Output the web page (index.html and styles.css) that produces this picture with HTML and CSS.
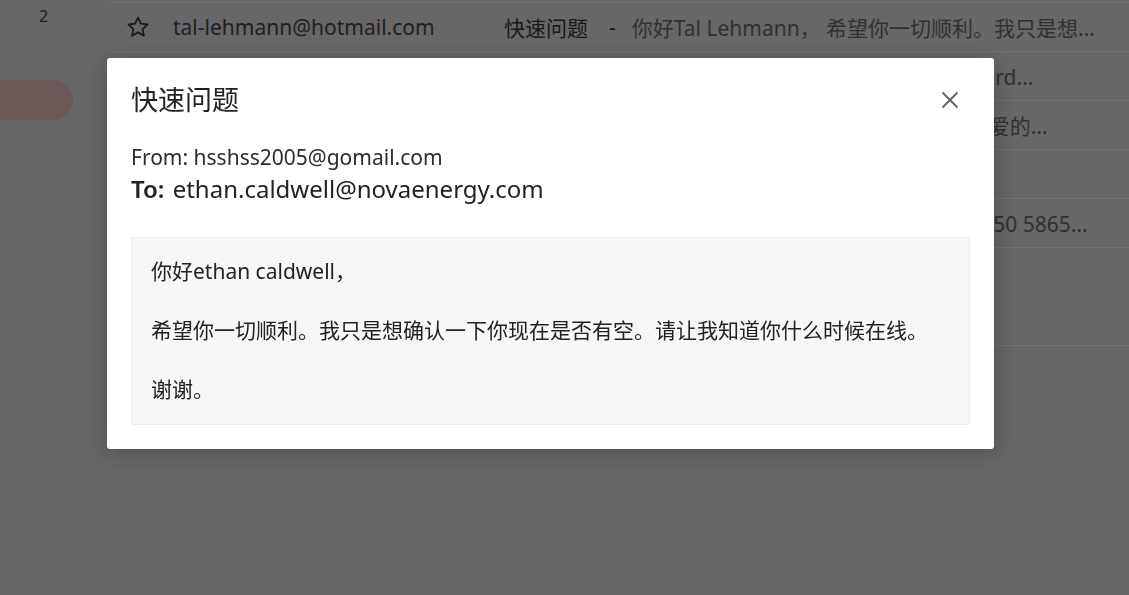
FILE: index.html
```html
<!DOCTYPE html>
<html lang="zh-CN">
<head>
  <meta charset="UTF-8">
  <meta name="viewport" content="width=device-width, initial-scale=1">
  <title>收件箱</title>
  <link rel="stylesheet" href="styles.css">
</head>
<body>

  <!-- Mail app behind the dialog -->
  <div class="app">
    <aside class="sidebar">
      <div class="count">2</div>
      <div class="nav-pill"></div>
    </aside>

    <main class="mail-list">
      <div class="row">
        <svg class="star" viewBox="0 0 24 24" width="24" height="24"><path d="M12 2.6l2.9 6.1 6.6.8-4.9 4.6 1.3 6.6L12 17.4l-5.9 3.3 1.3-6.6-4.9-4.6 6.6-.8z" fill="none" stroke="currentColor" stroke-width="1.8" stroke-linejoin="round"/></svg>
        <span class="sender">tal-lehmann@hotmail.com</span>
        <span class="subject">快速问题</span>
        <span class="dash">-</span>
        <span class="preview">你好Tal Lehmann， 希望你一切顺利。我只是想...</span>
      </div>
      <div class="row">
        <svg class="star" viewBox="0 0 24 24" width="24" height="24"><path d="M12 2.6l2.9 6.1 6.6.8-4.9 4.6 1.3 6.6L12 17.4l-5.9 3.3 1.3-6.6-4.9-4.6 6.6-.8z" fill="none" stroke="currentColor" stroke-width="1.8" stroke-linejoin="round"/></svg>
        <span class="sender">nora.hughes@gmail.com</span>
        <span class="subject">季度报告</span>
        <span class="dash">-</span>
        <span class="preview">请查看附件中的季度销售报告 dashboard...</span>
      </div>
      <div class="row">
        <svg class="star" viewBox="0 0 24 24" width="24" height="24"><path d="M12 2.6l2.9 6.1 6.6.8-4.9 4.6 1.3 6.6L12 17.4l-5.9 3.3 1.3-6.6-4.9-4.6 6.6-.8z" fill="none" stroke="currentColor" stroke-width="1.8" stroke-linejoin="round"/></svg>
        <span class="sender">service@novaenergy.com</span>
        <span class="subject">感谢信</span>
        <span class="dash">-</span>
        <span class="preview">非常感谢你们一直以来的支持，致我们亲爱的...</span>
      </div>
      <div class="row">
        <svg class="star" viewBox="0 0 24 24" width="24" height="24"><path d="M12 2.6l2.9 6.1 6.6.8-4.9 4.6 1.3 6.6L12 17.4l-5.9 3.3 1.3-6.6-4.9-4.6 6.6-.8z" fill="none" stroke="currentColor" stroke-width="1.8" stroke-linejoin="round"/></svg>
        <span class="sender">mark.ellis@outlook.com</span>
        <span class="subject">会议</span>
        <span class="dash">-</span>
        <span class="preview">明天上午十点开会。</span>
      </div>
      <div class="row">
        <svg class="star" viewBox="0 0 24 24" width="24" height="24"><path d="M12 2.6l2.9 6.1 6.6.8-4.9 4.6 1.3 6.6L12 17.4l-5.9 3.3 1.3-6.6-4.9-4.6 6.6-.8z" fill="none" stroke="currentColor" stroke-width="1.8" stroke-linejoin="round"/></svg>
        <span class="sender">support@bankline.com</span>
        <span class="subject">账户通知</span>
        <span class="dash">-</span>
        <span class="preview">如有任何疑问请随时致电客服 +1 415 650 5865...</span>
      </div>
      <div class="row tall"></div>
    </main>
  </div>

  <!-- Message dialog -->
  <div class="overlay">
    <div class="modal">
      <div class="modal-header">
        <h2>快速问题</h2>
        <button class="close-btn" aria-label="关闭">
          <svg viewBox="0 0 18 18" width="18" height="18"><path d="M1.5 1.5l15 15M16.5 1.5l-15 15" stroke="#666" stroke-width="2" fill="none"/></svg>
        </button>
      </div>
      <div class="meta">
        <div class="from">From: hsshss2005@gomail.com</div>
        <div class="to"><b>To:</b> ethan.caldwell@novaenergy.com</div>
      </div>
      <div class="message">
        <p>你好ethan caldwell，</p>
        <p>希望你一切顺利。我只是想确认一下你现在是否有空。请让我知道你什么时候在线。</p>
        <p>谢谢。</p>
      </div>
    </div>
  </div>

</body>
</html>
```

FILE: styles.css
```css
/* Global */
body {
  margin: 0;
  font-family: "Noto Sans", "Noto Sans CJK SC", sans-serif;
  background: #e6e2e6;
  color: #333;
  overflow: hidden;
}

/* Mail app underneath */
.app {
  display: flex;
  height: 100vh;
}
.sidebar {
  width: 108px;
  flex-shrink: 0;
}
.count {
  font-size: 16px;
  line-height: 32px;
  color: #444;
  padding-left: 39px;
}
.nav-pill {
  margin: 48px 0 0 -20px;
  width: 93px;
  height: 40px;
  border-radius: 0 20px 20px 0;
  background: #efc2c2;
}
.mail-list {
  flex: 1;
  padding-top: 2px;
}
.row {
  display: flex;
  align-items: center;
  height: 48px;
  padding-left: 18px;
  border-top: 1px solid #fbfbfb;
  font-size: 21px;
  white-space: nowrap;
}
.row.tall {
  height: 97px;
  border-bottom: 1px solid #fbfbfb;
}
.star {
  color: #3c3c3c;
  flex-shrink: 0;
}
.sender {
  width: 331px;
  margin-left: 23px;
  color: #4a4a4a;
}
.subject {
  color: #3a3a3a;
}
.dash {
  margin: 0 16px 0 21px;
  color: #3a3a3a;
}
.preview {
  color: #6e6e6e;
}

/* Dialog */
.overlay {
  position: fixed;
  inset: 0;
  background: rgba(0, 0, 0, 0.55);
  padding: 58px 0 0 107px;
}
.modal {
  width: 887px;
  box-sizing: border-box;
  background: #fff;
  border-radius: 3px;
  padding: 22px 24px 24px;
  box-shadow: 0 4px 24px rgba(0, 0, 0, 0.25);
  color: #222;
}
.modal-header {
  display: flex;
  justify-content: space-between;
  align-items: center;
  height: 40px;
}
.modal-header h2 {
  margin: 0;
  font-size: 27px;
  font-weight: 400;
  line-height: 40px;
}
.close-btn {
  width: 40px;
  height: 40px;
  border: none;
  background: none;
  padding: 0;
  display: flex;
  align-items: center;
  justify-content: center;
  cursor: pointer;
}
.meta {
  margin-top: 23px;
}
.from {
  font-size: 21px;
  line-height: 28px;
  color: #2c2c2c;
}
.to {
  font-size: 24px;
  line-height: 36px;
}
.to b {
  font-weight: 600;
  margin-right: 2px;
}
.message {
  margin-top: 30px;
  background: #f7f7f9;
  border: 1px solid #ededf0;
  border-radius: 2px;
  padding: 19px 19px;
  font-size: 21px;
  line-height: 29.5px;
}
.message p {
  margin: 0 0 29.5px;
}
.message p:last-child {
  margin-bottom: 0;
}
```
